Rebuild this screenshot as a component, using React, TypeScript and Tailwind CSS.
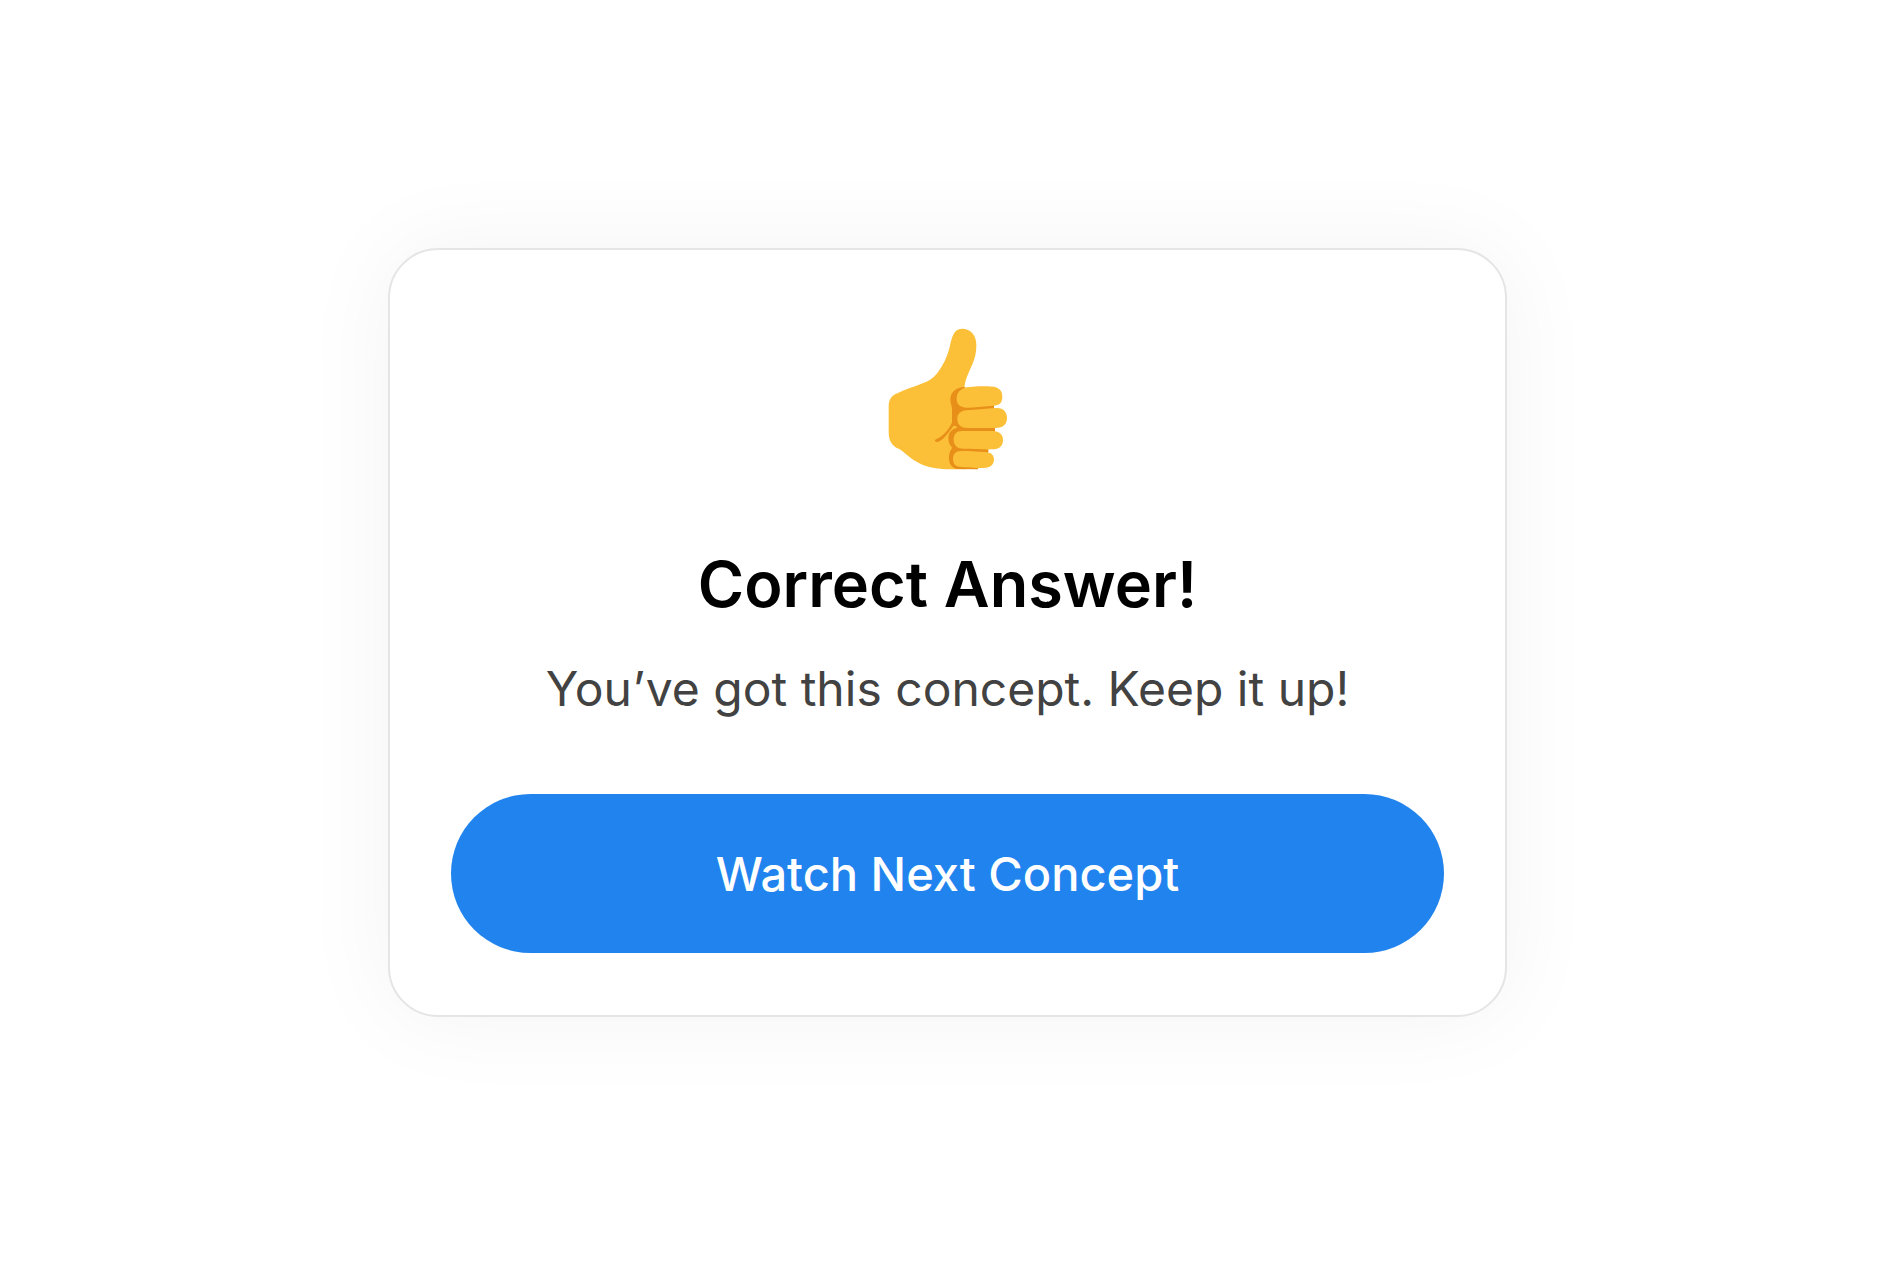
function ThumbsUp() {
  return (
    <svg viewBox="54 54 360 426" className="h-[142px] w-[120px]" role="img" aria-label="Thumbs up">
      <path
        fill="#FBC037"
        d="M276 56C302 56 319 75 319 104C319 134 312 153 303 172C293 194 284 214 283 234L290 478H246C205 477 176 473 151 461C120 447 107 429 88 417C66 409 56 392 56 365V290C56 268 65 256 82 250C105 239 134 230 158 220C177 213 190 204 202 189C218 169 231 143 239 112C245 83 251 56 276 56Z"
      />
      <path
        fill="#E78F19"
        d="M283 231C260 231 241 246 241 268C241 280 246 287 246 299C246 311 246 328 246 337C240 354 224 372 210 382L198 388C191 392 196 398 205 395C220 390 236 366 251 347C258 347 260 349 262 353C246 355 235 368 235 383C235 396 239 405 247 413C240 421 236 433 237 447C238 463 246 473 260 477L323 478L355 426V416L375 363V354L372 293V285Z"
      />
      <path
        fill="#FBC037"
        d="M283 234C301 229 330 229 353 229C382 229 397 238 397 260C397 279 388 286 370 287L300 293C274 294 260 286 260 266C260 250 268 240 283 234Z"
      />
      <path
        fill="#FBC037"
        d="M289 301C315 299 347 296 377 294C398 292 411 304 411 324C411 343 399 354 378 354H294C274 354 262 345 262 327C262 312 270 303 289 301Z"
      />
      <path
        fill="#FBC037"
        d="M276 363H369C388 363 399 374 399 390C399 408 388 418 367 418C337 419 308 416 282 416C262 416 251 406 251 389C251 373 260 363 276 363Z"
      />
      <path
        fill="#FBC037"
        d="M273 423C296 423 320 425 347 426C363 427 372 435 372 448C372 464 362 474 342 474C316 475 297 471 274 471C257 471 249 462 249 447C249 432 257 423 273 423Z"
      />
    </svg>
  );
}

export default function App() {
  return (
    <main className="flex min-h-screen items-center justify-center bg-white p-6 font-['Inter',sans-serif]">
      <section className="flex w-full max-w-[1119px] flex-col items-center rounded-[50px] border-2 border-[#e5e5e5] bg-white px-[61px] pt-[78px] pb-[62px] text-center shadow-[0_0_96px_rgba(0,0,0,0.05)]">
        <ThumbsUp />
        <h1 className="mt-[74px] text-[63px] leading-[80px] font-semibold text-black">Correct Answer!</h1>
        <p className="mt-[33px] text-[48px] leading-[64px] text-[#424242]">You’ve got this concept. Keep it up!</p>
        <button
          type="button"
          className="mt-[73px] h-[159px] w-full cursor-pointer rounded-full bg-[#2184ee] text-[47px] leading-[64px] font-medium text-white"
        >
          Watch Next Concept
        </button>
      </section>
    </main>
  );
}
